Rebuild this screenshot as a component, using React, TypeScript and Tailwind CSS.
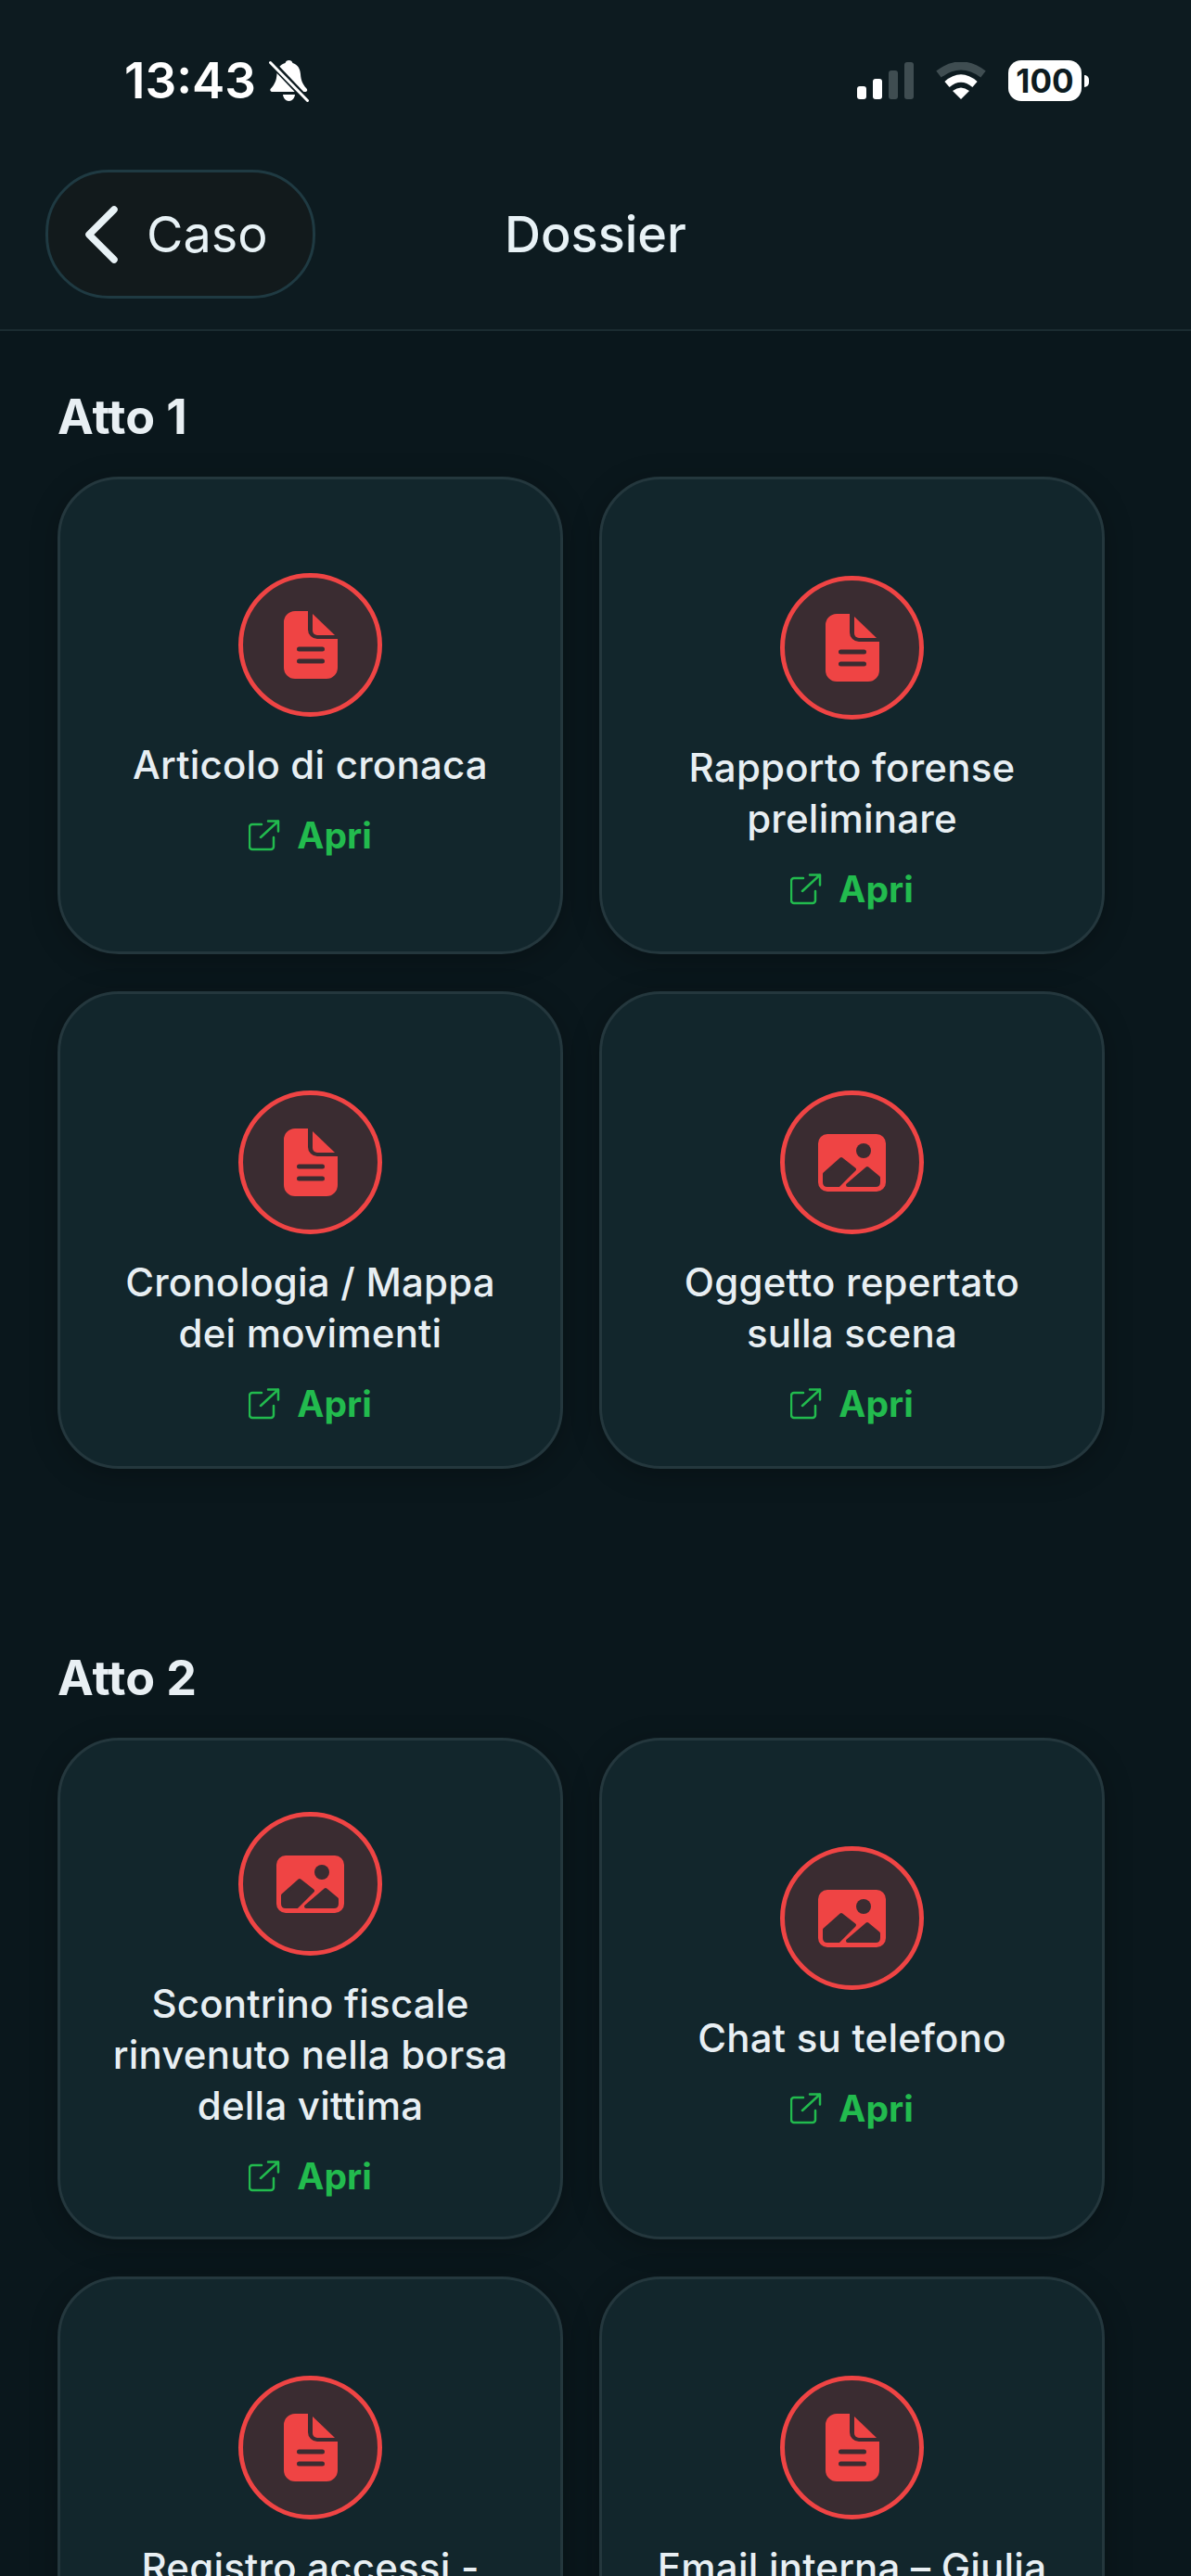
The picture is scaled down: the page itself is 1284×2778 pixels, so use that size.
import React from "react";

const DocIcon = () => (
  <svg width="58" height="73" viewBox="0 0 58 73">
    <path fill="#ef4444" d="M12 0H26V20A10 10 0 0 0 36 30H58V61A12 12 0 0 1 46 73H12A12 12 0 0 1 0 61V12A12 12 0 0 1 12 0Z" />
    <path fill="#ef4444" d="M31 3L55 26H36A5 5 0 0 1 31 21Z" />
    <path stroke="#3a2c31" strokeWidth="5" strokeLinecap="round" d="M16.5 41H41.5M16.5 54H41.5" />
  </svg>
);

const ImageIcon = () => (
  <svg width="73" height="62" viewBox="0 0 73 62">
    <rect width="73" height="62" rx="10" fill="#ef4444" />
    <circle cx="49" cy="18" r="8" fill="#3a2c31" />
    <path fill="#3a2c31" stroke="#3a2c31" strokeWidth="4" strokeLinejoin="round" d="M7 43L25 27L39 38L22 55H10Q7 55 7 52Z" />
    <path fill="#3a2c31" stroke="#3a2c31" strokeWidth="4" strokeLinejoin="round" d="M32 55L53 37L65 47V52Q65 55 62 55Z" />
  </svg>
);

const OpenIcon = () => (
  <svg width="34" height="34" viewBox="0 0 34 34" fill="none" stroke="#22bb4e" strokeWidth="2.5" strokeLinecap="round" strokeLinejoin="round">
    <path d="M14 5H4A3 3 0 0 0 1 8V29A3 3 0 0 0 4 32H24A3 3 0 0 0 27 29V19" />
    <path d="M13 19L32 1.5M21 1.5H32V12.5" />
  </svg>
);

const BellOff = () => (
  <svg width="43" height="46" viewBox="0 0 43 46">
    <path fill="#fff" d="M21.5 1c2 0 3.5 1.2 4 3 5.5 1.6 8 6 8.5 12 .4 6 2 10.5 6.500 15.500 1.500 1.800.5 3.500-1.500 3.500H4c-2.500 0-3.500-2-2-3.500 4.500-5 6-9 6.500-15.500.5-6 3-10.400 9-12 .5-1.800 2-3 4-3Z" />
    <path fill="#fff" d="M15 38h13c-.5 4-3 7-6.500 7S15.500 42 15 38Z" />
    <path stroke="#0d1b20" strokeWidth="7" d="M2 3L42 45" />
    <path stroke="#fff" strokeWidth="3" strokeLinecap="round" d="M1.500 3.500L41.500 44.500" />
  </svg>
);

const Wifi = () => (
  <svg width="54" height="40" viewBox="0 0 54 40" fill="none">
    <path stroke="#3f4d51" strokeWidth="9" d="M3 13Q27 -5 51 13" />
    <path stroke="#fff" strokeWidth="8" d="M12 24Q27 11 42 24" />
    <path fill="#fff" d="M27 40L18 31Q27 24 36 31Z" />
  </svg>
);

type Item = { title: string; icon: "doc" | "image"; layout: string };

const Card = ({ item }: { item: Item }) => (
  <div className={`flex flex-col items-center rounded-[66px] border-[3px] border-[#24373d] bg-[#12262c] px-[48px] shadow-[0_6px_30px_rgba(0,0,0,0.25)] ${item.layout}`}>
    <div className="flex h-[155px] w-[155px] shrink-0 items-center justify-center rounded-full border-[5px] border-[#ef4444] bg-[#3a2c31]">
      {item.icon === "doc" ? <DocIcon /> : <ImageIcon />}
    </div>
    <p className="mt-[24px] text-center text-[42px] font-medium leading-[55px] tracking-[0.005em] text-[#e8eff3]">{item.title}</p>
    <div className="mt-[25px] flex h-[48px] items-center gap-[18px]">
      <OpenIcon />
      <span className="text-[39px] font-bold text-[#22bb4e]">Apri</span>
    </div>
  </div>
);

const Section = ({ title, items, className }: { title: string; items: Item[]; className: string }) => (
  <section className={className}>
    <h2 className="mb-[34px] text-[52px] font-bold leading-[60px] text-[#e8eff3]">{title}</h2>
    <div className="grid grid-cols-2 gap-x-[39px] gap-y-[40px]">
      {items.map((item) => (
        <Card key={item.title} item={item} />
      ))}
    </div>
  </section>
);

const center = "min-h-[515px] justify-center";
const two = "min-h-[515px] justify-start pt-[104px]";
const three = "justify-start pt-[77px] pb-[41px]";

const act1: Item[] = [
  { title: "Articolo di cronaca", icon: "doc", layout: center },
  { title: "Rapporto forense preliminare", icon: "doc", layout: two },
  { title: "Cronologia / Mappa dei movimenti", icon: "doc", layout: two },
  { title: "Oggetto repertato sulla scena", icon: "image", layout: two },
];

const act2: Item[] = [
  { title: "Scontrino fiscale rinvenuto nella borsa della vittima", icon: "image", layout: three },
  { title: "Chat su telefono", icon: "image", layout: "justify-center" },
  { title: "Registro accessi -", icon: "doc", layout: two },
  { title: "Email interna – Giulia", icon: "doc", layout: two },
];

export default function App() {
  return (
    <div className="h-[2778px] w-[1284px] overflow-hidden bg-[#0a171c] font-['Inter',sans-serif]">
      <div className="bg-[#0d1b20]">
        <div className="flex h-[174px] items-center justify-between pl-[134px] pr-[110px]">
          <div className="flex items-center gap-[14px]">
            <span className="text-[53px] font-semibold leading-none text-white">13:43</span>
            <BellOff />
          </div>
          <div className="flex items-center gap-[24px]">
            <div className="flex h-[40px] items-end gap-[7px]">
              <div className="h-[14px] w-[10px] rounded-[3px] bg-white" />
              <div className="h-[22px] w-[10px] rounded-[3px] bg-white" />
              <div className="h-[31px] w-[10px] rounded-[3px] bg-[#3f4d51]" />
              <div className="h-[40px] w-[10px] rounded-[3px] bg-[#3f4d51]" />
            </div>
            <Wifi />
            <div className="flex items-center gap-[3px]">
              <div className="flex h-[44px] w-[79px] items-center justify-center rounded-[14px] bg-white text-[35px] font-bold leading-none text-[#0d1b20]">100</div>
              <div className="h-[13px] w-[5px] rounded-r-full bg-white" />
            </div>
          </div>
        </div>
        <header className="grid grid-cols-[1fr_auto_1fr] items-center border-b-[2px] border-[#1b2c31] pb-[33px] pl-[49px] pr-[49px] pt-[9px]">
          <div className="flex h-[139px] w-[291px] items-center gap-[30px] rounded-[68px] border-[3px] border-[#1f3a42] bg-[#121a1c] pl-[40px]">
            <svg width="36" height="62" viewBox="0 0 36 62" fill="none" stroke="#e8f2f6" strokeWidth="7.500" strokeLinecap="round" strokeLinejoin="round">
              <path d="M31 4L4 31L31 58" />
            </svg>
            <span className="text-[54px] font-normal leading-none text-[#e8f2f6]">Caso</span>
          </div>
          <h1 className="text-[54px] font-medium leading-none text-[#e8f2f6]">Dossier</h1>
          <div />
        </header>
      </div>
      <main className="pl-[62px] pr-[93px]">
        <Section title="Atto 1" items={act1} className="pt-[63px]" />
        <Section title="Atto 2" items={act2} className="pt-[196px]" />
      </main>
    </div>
  );
}
